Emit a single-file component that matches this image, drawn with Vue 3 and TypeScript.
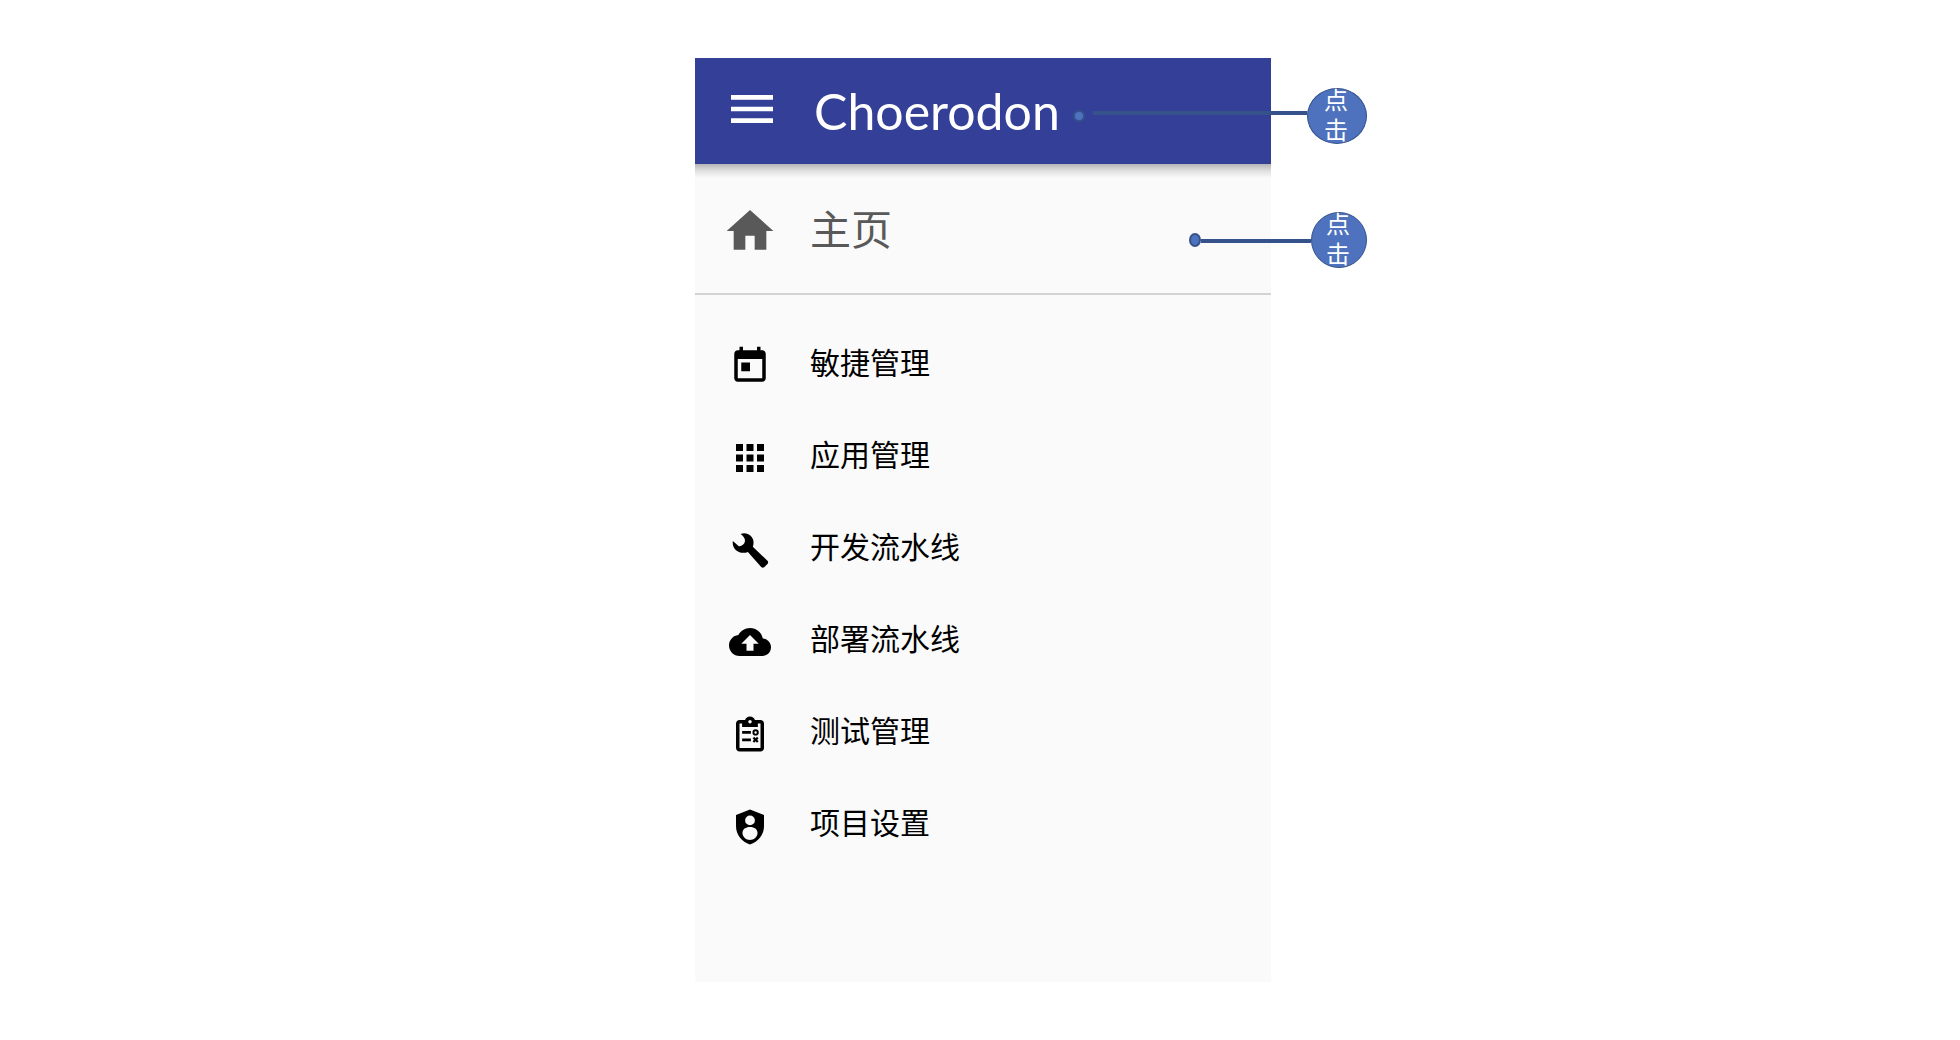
<script setup lang="ts">
interface MenuItem {
  label: string
  path: string
}

const items: MenuItem[] = [
  {
    label: '敏捷管理',
    path: 'M19 3h-1V1h-2v2H8V1H6v2H5c-1.11 0-2 .9-2 2v14c0 1.1.89 2 2 2h14c1.1 0 2-.9 2-2V5c0-1.1-.9-2-2-2zm0 16H5V8h14v11zM7 10h5v5H7z',
  },
  {
    label: '应用管理',
    path: 'M4 8h4V4H4v4zm6 12h4v-4h-4v4zm-6 0h4v-4H4v4zm0-6h4v-4H4v4zm6 0h4v-4h-4v4zm6-10v4h4V4h-4zm-6 4h4V4h-4v4zm6 6h4v-4h-4v4zm0 6h4v-4h-4v4z',
  },
  {
    label: '开发流水线',
    path: 'M2.200 6.800 5.600 9.800C7 10.100 8.700 9 9.100 7.200 9.300 5.500 8.400 4.200 6.600 2.900 9.700 1.300 13.900 3.600 14 7.300Q14.100 8.800 13.600 10.200L22 18.100Q22.700 19 22.100 19.800L20.100 21.900Q19.200 22.500 18.400 21.700L10.800 13.100C6.800 14.800 1.400 12.200 2.200 6.800Z',
  },
  {
    label: '部署流水线',
    path: 'M19.35 10.04C18.67 6.59 15.64 4 12 4 9.11 4 6.6 5.64 5.35 8.04 2.34 8.36 0 10.91 0 14c0 3.31 2.69 6 6 6h13c2.76 0 5-2.24 5-5 0-2.64-2.05-4.78-4.65-4.96zM14 13v4h-4v-4H7l5-5 5 5h-3z',
  },
  {
    label: '测试管理',
    path: 'M18 4h-3.2C14.4 2.8 13.3 2 12 2s-2.4.8-2.8 2H6C4.9 4 4 4.9 4 6v14c0 1.1.9 2 2 2h12c1.1 0 2-.9 2-2V6c0-1.1-.9-2-2-2zm-6 0a1 1 0 1 1 0 2 1 1 0 0 1 0-2zM18 20H6V6h1.500v2h9V6H18zM7.500 10.300h5v1.600h-5zM7.500 14.500h5v1.600h-5zM15.200 9.300a1.800 1.800 0 1 0 0 3.600 1.800 1.800 0 0 0 0-3.600zm0 1.100a.7.7 0 1 1 0 1.400.7.7 0 0 1 0-1.400zM14.400 13.600l.8.8.8-.8.9.9-.8.8.8.8-.9.9-.8-.8-.8.8-.9-.9.8-.8-.8-.8z',
  },
  {
    label: '项目设置',
    path: 'M12 2.500 4 5.700V12c0 5.200 3.300 9 8 10.500 4.700-1.500 8-5.300 8-10.500V5.700zM12 6a2.800 2.800 0 1 1 0 5.600 2.800 2.800 0 0 1 0-5.600zM12 12.500c2.600 0 4.300 1.300 4.300 3.500 0 2.400-2.200 4-4.300 4s-4.300-1.600-4.300-4c0-2.200 1.700-3.500 4.300-3.500z',
  },
]
</script>

<template>
  <main class="page">
    <div class="phone">
      <header class="bar">
        <button class="menu-button" type="button" aria-label="菜单">
          <svg class="icon-large" viewBox="0 0 24 24" aria-hidden="true">
            <path d="M3 18h18v-2H3v2zm0-5h18v-2H3v2zm0-7v2h18V6H3z" />
          </svg>
        </button>
        <h1 class="brand">Choerodon</h1>
        <div class="callout callout-brand">
          <span class="dot"></span>
          <span class="line"></span>
          <span class="bubble"><span>点<br />击</span></span>
        </div>
      </header>
      <nav>
        <a class="home" href="#home">
          <svg class="icon-large" viewBox="0 0 24 24" aria-hidden="true">
            <path d="M10 20v-6h4v6h5v-8h3L12 3 2 12h3v8z" />
          </svg>
          <span class="label">主页</span>
          <span class="callout callout-home">
            <span class="dot"></span>
            <span class="line"></span>
            <span class="bubble"><span>点<br />击</span></span>
          </span>
        </a>
        <ul class="list">
          <li v-for="item in items" :key="item.label">
            <a class="item" href="#">
              <svg class="icon" viewBox="0 0 24 24" aria-hidden="true">
                <path :d="item.path" fill-rule="evenodd" />
              </svg>
              <span class="label">{{ item.label }}</span>
            </a>
          </li>
        </ul>
      </nav>
    </div>
  </main>
</template>

<style>
body {
  margin: 0;
  background: #fff;
}
</style>

<style scoped>
.page {
  display: flex;
  justify-content: center;
  padding: 58px 0 58px 6px;
  font-family: "Noto Sans CJK SC", sans-serif;
}

.phone {
  width: 100%;
  max-width: 576px;
  padding-bottom: 113px;
  background: #fafafa;
}

.bar {
  position: relative;
  display: flex;
  align-items: center;
  gap: 34px;
  height: 106px;
  padding-left: 29px;
  box-sizing: border-box;
  background: #344098;
  color: #fff;
}

.bar::after {
  content: "";
  position: absolute;
  top: 100%;
  left: 0;
  right: 0;
  height: 14px;
  background: linear-gradient(rgba(0, 0, 0, 0.28), rgba(0, 0, 0, 0.1) 50%, transparent);
}

.menu-button {
  display: flex;
  padding: 0 0 4px;
  border: 0;
  background: none;
  color: inherit;
}

.icon-large {
  width: 56px;
  height: 56px;
  fill: currentColor;
}

.brand {
  margin: 0;
  font: 400 50px/64px Lato, sans-serif;
}

.home {
  position: relative;
  display: flex;
  align-items: center;
  gap: 32px;
  height: 131px;
  padding-left: 27px;
  box-sizing: border-box;
  border-bottom: 2px solid #d3d3d3;
  color: #595959;
  font-size: 41px;
  line-height: 60px;
  text-decoration: none;
}

.home .icon-large {
  margin-top: 4px;
}

.label {
  padding-bottom: 4px;
}

.list {
  margin: 0;
  padding: 22px 0 0;
  list-style: none;
}

.item {
  display: flex;
  align-items: center;
  gap: 39px;
  height: 92px;
  padding-left: 34px;
  color: #000;
  font-size: 30px;
  line-height: 44px;
  text-decoration: none;
}

.icon {
  width: 42px;
  height: 42px;
  margin-top: 6px;
  fill: currentColor;
}

.callout {
  position: absolute;
  z-index: 1;
  display: flex;
  align-items: center;
}

.callout-brand {
  top: 30px;
  left: 378px;
}

.callout-home {
  top: 48px;
  left: 494px;
}

.dot {
  width: 12px;
  height: 12px;
  box-sizing: border-box;
  border: 2px solid #35528a;
  border-radius: 50%;
  background: #4e72be;
}

.line {
  height: 4px;
  background: #35528a;
}

.callout-brand .line {
  width: 214px;
  margin: 0 0 6px 8px;
}

.callout-home .dot {
  height: 14px;
}

.callout-home .line {
  width: 110px;
  margin-top: 2px;
}

.bubble {
  display: grid;
  place-content: center;
  width: 56px;
  height: 56px;
  padding-right: 2px;
  box-sizing: border-box;
  border: 1px solid #35528a;
  border-radius: 50%;
  background: #4e72be;
  color: #fff;
  font-family: "Liberation Sans", "Noto Sans CJK SC", sans-serif;
  font-size: 24px;
  line-height: 30px;
  text-align: center;
}

.callout-brand .bubble {
  width: 60px;
}
</style>
